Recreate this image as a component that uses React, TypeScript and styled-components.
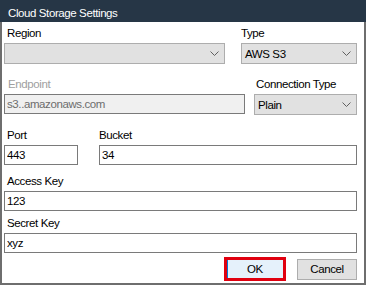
import styled, { createGlobalStyle } from "styled-components";

const GlobalStyle = createGlobalStyle`
  html, body {
    margin: 0;
    padding: 0;
    background: #ffffff;
  }
  * {
    box-sizing: border-box;
  }
`;

const Window = styled.div`
  width: 366px;
  height: 285px;
  display: flex;
  flex-direction: column;
  background: #ffffff;
  font-family: "Liberation Sans", Arial, sans-serif;
  font-size: 11.5px;
  letter-spacing: -0.4px;
  color: #000000;
`;

const TitleBar = styled.div`
  height: 22px;
  flex: none;
  background: #263646;
  color: #ffffff;
  padding: 6px 0 0 8px;
  line-height: 14px;
`;

const Body = styled.div`
  flex: 1;
  display: flex;
  flex-direction: column;
  border: 2px solid #6e6e6e;
  border-top: none;
  padding: 4px 7px 0 2px;
`;

const Row = styled.div<{ $top: number }>`
  display: flex;
  align-items: flex-start;
  margin-top: ${(p) => p.$top}px;
`;

const Field = styled.div<{ $width?: number; $gap?: number }>`
  display: flex;
  flex-direction: column;
  width: ${(p) => (p.$width ? `${p.$width}px` : "auto")};
  flex: ${(p) => (p.$width ? "none" : "1")};
  margin-left: ${(p) => p.$gap ?? 0}px;
`;

const Label = styled.label<{ $indent?: number; $disabled?: boolean }>`
  height: 14px;
  line-height: 14px;
  margin-bottom: 3px;
  padding-left: ${(p) => p.$indent ?? 0}px;
  color: ${(p) => (p.$disabled ? "#a0a0a0" : "#000000")};
  white-space: nowrap;
`;

const TextBox = styled.input<{ $height?: number }>`
  height: ${(p) => p.$height ?? 20}px;
  width: 100%;
  margin: 0;
  border: 1px solid #7a7a7a;
  background: #ffffff;
  padding: 0 2px;
  font: inherit;
  letter-spacing: inherit;
  color: #000000;
  outline: none;

  &:disabled {
    background: #f0f0f0;
    color: #6d6d6d;
    -webkit-text-fill-color: #6d6d6d;
  }
`;

const Combo = styled.div`
  height: 21px;
  display: flex;
  align-items: center;
  justify-content: space-between;
  border: 1px solid #adadad;
  background: #e1e1e1;
  padding: 0 5px 0 3px;
`;

const Chevron = styled.svg`
  width: 9px;
  height: 5px;
  flex: none;
`;

const ButtonRow = styled.div`
  display: flex;
  justify-content: flex-end;
  align-items: center;
  gap: 11px;
  margin-top: 4px;
  height: 24px;
`;

const Button = styled.button<{ $focused?: boolean }>`
  font: inherit;
  letter-spacing: inherit;
  color: #000000;
  margin: 0;
  padding: 0;
  width: ${(p) => (p.$focused ? 62 : 60)}px;
  height: ${(p) => (p.$focused ? 24 : 21)}px;
  background: ${(p) => (p.$focused ? "#e5f1fb" : "#e1e1e1")};
  border: ${(p) => (p.$focused ? "3px solid #e0000f" : "1px solid #adadad")};
  box-shadow: ${(p) => (p.$focused ? "inset 1px 0 0 #0078d7" : "none")};
`;

const ComboBox = ({ value }: { value?: string }) => (
  <Combo>
    <span>{value}</span>
    <Chevron viewBox="0 0 9 5">
      <polyline
        points="0.5,0.5 4.5,4.5 8.5,0.5"
        fill="none"
        stroke="#606060"
        strokeWidth="1"
      />
    </Chevron>
  </Combo>
);

const App = () => {
  return (
    <>
      <GlobalStyle />
      <Window>
        <TitleBar>Cloud Storage Settings</TitleBar>
        <Body>
          <Row $top={0}>
            <Field $width={221}>
              <Label $indent={3}>Region</Label>
              <ComboBox />
            </Field>
            <Field $width={116} $gap={16}>
              <Label>Type</Label>
              <ComboBox value="AWS S3" />
            </Field>
          </Row>
          <Row $top={13}>
            <Field $width={241}>
              <Label $indent={4} $disabled>
                Endpoint
              </Label>
              <TextBox disabled defaultValue="s3..amazonaws.com" />
            </Field>
            <Field $width={103} $gap={9}>
              <Label $indent={2}>Connection Type</Label>
              <ComboBox value="Plain" />
            </Field>
          </Row>
          <Row $top={13}>
            <Field $width={74}>
              <Label $indent={3}>Port</Label>
              <TextBox defaultValue="443" />
            </Field>
            <Field $gap={21}>
              <Label>Bucket</Label>
              <TextBox defaultValue="34" />
            </Field>
          </Row>
          <Row $top={9}>
            <Field>
              <Label $indent={3}>Access Key</Label>
              <TextBox defaultValue="123" />
            </Field>
          </Row>
          <Row $top={5}>
            <Field>
              <Label $indent={3}>Secret Key</Label>
              <TextBox defaultValue="xyz" />
            </Field>
          </Row>
          <ButtonRow>
            <Button $focused>OK</Button>
            <Button>Cancel</Button>
          </ButtonRow>
        </Body>
      </Window>
    </>
  );
};

export default App;
